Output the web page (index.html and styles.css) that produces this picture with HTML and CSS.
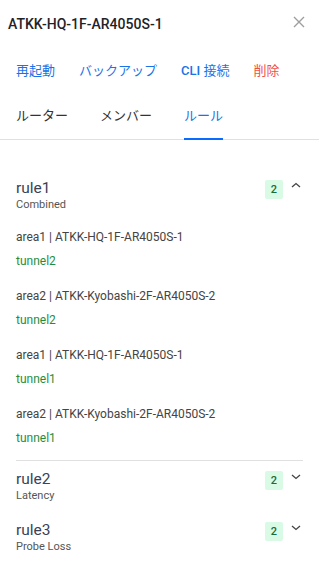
FILE: index.html
```html
<!DOCTYPE html>
<html lang="ja">
    <head>
        <meta charset="UTF-8">
        <meta name="viewport" content="width=device-width, initial-scale=1.0">
        <title>ATKK-HQ-1F-AR4050S-1</title>
        <link rel="stylesheet" href="styles.css">
    </head>
    <body>
        <div class="panel">
            <div class="header">
                <span class="title">ATKK-HQ-1F-AR4050S-1</span>
                <span class="close">
                    <svg width="12" height="12" viewBox="0 0 12 12">
                        <path d="M1 1 L11 11 M11 1 L1 11" stroke="#9e9e9e" stroke-width="1.4" fill="none"/>
                    </svg>
                </span>
            </div>

            <div class="actions">
                <span class="action">再起動</span>
                <span class="action">バックアップ</span>
                <span class="action"><b>CLI</b> 接続</span>
                <span class="action danger">削除</span>
            </div>

            <div class="tabs">
                <span class="tab">ルーター</span>
                <span class="tab">メンバー</span>
                <span class="tab active">ルール</span>
            </div>

            <div class="rules">
                <div class="rule open">
                    <div class="rule_head">
                        <div class="rule_name">
                            <div class="rule_title">rule1</div>
                            <div class="rule_type">Combined</div>
                        </div>
                        <span class="badge">2</span>
                        <svg class="chevron" width="12" height="12" viewBox="0 0 12 12">
                            <path d="M2 7 L6 3.5 L10 7" stroke="#444" stroke-width="1.3" fill="none"/>
                        </svg>
                    </div>
                    <div class="entries">
                        <div class="entry">
                            <div class="area">area1 | ATKK-HQ-1F-AR4050S-1</div>
                            <div class="tunnel">tunnel2</div>
                        </div>
                        <div class="entry">
                            <div class="area">area2 | ATKK-Kyobashi-2F-AR4050S-2</div>
                            <div class="tunnel">tunnel2</div>
                        </div>
                        <div class="entry">
                            <div class="area">area1 | ATKK-HQ-1F-AR4050S-1</div>
                            <div class="tunnel">tunnel1</div>
                        </div>
                        <div class="entry">
                            <div class="area">area2 | ATKK-Kyobashi-2F-AR4050S-2</div>
                            <div class="tunnel">tunnel1</div>
                        </div>
                    </div>
                </div>

                <div class="rule">
                    <div class="rule_head">
                        <div class="rule_name">
                            <div class="rule_title">rule2</div>
                            <div class="rule_type">Latency</div>
                        </div>
                        <span class="badge">2</span>
                        <svg class="chevron" width="12" height="12" viewBox="0 0 12 12">
                            <path d="M2 4 L6 7.5 L10 4" stroke="#444" stroke-width="1.3" fill="none"/>
                        </svg>
                    </div>
                </div>

                <div class="rule">
                    <div class="rule_head">
                        <div class="rule_name">
                            <div class="rule_title">rule3</div>
                            <div class="rule_type">Probe Loss</div>
                        </div>
                        <span class="badge">2</span>
                        <svg class="chevron" width="12" height="12" viewBox="0 0 12 12">
                            <path d="M2 4 L6 7.5 L10 4" stroke="#444" stroke-width="1.3" fill="none"/>
                        </svg>
                    </div>
                </div>
            </div>
        </div>
    </body>
</html>
```

FILE: styles.css
```css
* {
    margin: 0;
    padding: 0;
    box-sizing: border-box;
}
body {
    background-color: #ffffff;
    font-family: Roboto, "Noto Sans CJK JP", sans-serif;
    color: #333;
}
.header {
    display: flex;
    justify-content: space-between;
    align-items: center;
    padding: 14px 14px 0 8px;
}
.title {
    font-size: 14px;
    font-weight: 500;
    line-height: 20px;
    color: #1f2328;
}
.close {
    display: flex;
    margin-top: -4px;
}
.actions {
    display: flex;
    gap: 24px;
    padding: 27px 16px 0;
    font-size: 13px;
    line-height: 20px;
}
.action {
    color: #1a73e8;
}
.action b {
    font-weight: 500;
}
.action.danger {
    color: #ef4f4a;
}
.tabs {
    display: flex;
    gap: 32px;
    margin-top: 25px;
    padding: 0 16px;
    border-bottom: 1px solid #e0e0e0;
}
.tab {
    font-size: 13px;
    line-height: 20px;
    padding-bottom: 12px;
    margin-bottom: -1px;
    border-bottom: 2px solid transparent;
    color: #333;
}
.tab.active {
    color: #1a73e8;
    border-bottom-color: #0a6cff;
}
.rules {
    padding: 30px 16px 0;
}
.rule {
    padding: 8px 0 9px;
}
.rule.open {
    padding-bottom: 14px;
    border-bottom: 1px solid #e0e0e0;
}
.rule_head {
    display: flex;
    align-items: flex-start;
}
.rule_name {
    flex: 1;
}
.rule_title {
    font-size: 15.5px;
    line-height: 20px;
    color: #3a4256;
}
.rule_type {
    font-size: 11px;
    line-height: 14px;
    color: #555;
}
.badge {
    margin-top: 2px;
    width: 18px;
    height: 19px;
    border-radius: 2px;
    background-color: #d9fbe6;
    color: #1e6b3a;
    font-size: 11px;
    font-weight: 500;
    line-height: 19px;
    text-align: center;
}
.chevron {
    margin: 2px 1px 0 7px;
}
.entries {
    display: flex;
    flex-direction: column;
    gap: 19px;
    margin-top: 17px;
}
.entry {
    display: flex;
    flex-direction: column;
    gap: 8px;
}
.area {
    font-size: 12px;
    line-height: 16px;
    color: #444;
}
.tunnel {
    font-size: 12px;
    line-height: 16px;
    color: #1e8e3e;
}
```
